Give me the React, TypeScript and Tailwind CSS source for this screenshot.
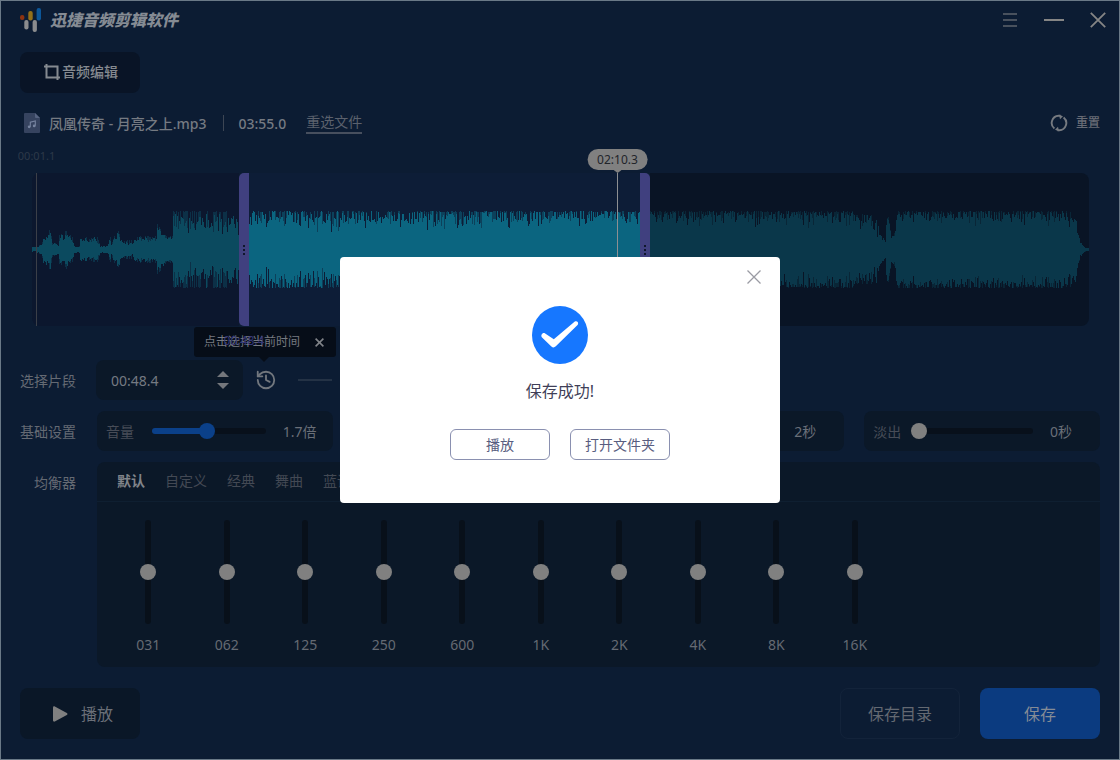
import React from 'react';
import { History } from 'lucide-react';

type Slice = { from: number; to: number };

const WAVE_HEIGHT = 153;
const WAVE_MIDDLE = 76;
const PEAK = 38;

/* Loudness envelope as [position, low, high] points; a bar falls between low and high. */
const ENVELOPE: [number, number, number][] = [
  [0, 1, 2], [6, 1, 3], [10, 3, 8], [11, 8, 17], [18, 10, 20], [20, 4, 7], [26, 3, 5],
  [27, 7, 14], [34, 9, 19], [40, 5, 12], [42, 2, 3], [47, 2, 3], [48, 7, 15], [56, 5, 11],
  [65, 4, 13], [68, 2, 3], [75, 2, 3], [78, 6, 13], [79, 3, 5], [82, 6, 14], [86, 9, 18],
  [90, 4, 9], [100, 4, 9], [103, 7, 13], [124, 7, 13], [125, 17, 25], [130, 12, 19],
  [134, 9, 13], [140, 8, 13], [141, 12, PEAK], [216, 12, PEAK], [217, 13, PEAK],
  [420, 16, PEAK], [500, 19, PEAK], [820, 20, PEAK], [822, 16, 34], [833, 14, 35],
  [839, 8, 34], [844, 8, 34], [848, 9, 14], [853, 6, 11], [854, 12, 30], [856, 24, 33],
  [859, 9, 12], [862, 10, 16], [865, 24, PEAK], [1044, 20, PEAK], [1045, 14, 18],
  [1048, 4, 8], [1052, 1, 2], [1057, 0, 1],
];

function randomSource(seed: number) {
  let state = seed;
  return () => {
    state = (state * 1664525 + 1013904223) % 4294967296;
    return state / 4294967296;
  };
}

function rangeAt(x: number): [number, number] {
  for (let i = 1; i < ENVELOPE.length; i++) {
    const [x1, lo1, hi1] = ENVELOPE[i];
    if (x <= x1) {
      const [x0, lo0, hi0] = ENVELOPE[i - 1];
      const t = (x - x0) / (x1 - x0);
      return [lo0 + (lo1 - lo0) * t, hi0 + (hi1 - hi0) * t];
    }
  }
  return [0, 1];
}

function buildWave() {
  const random = randomSource(77);
  const solid: number[][] = [];
  const faint: number[][] = [];
  for (let x = 0; x < 1057; x++) {
    const [lo, hi] = rangeAt(x);
    const power = x < 141 ? 1 : x < 217 ? 1.2 : 2.2;
    const drop = () => Math.pow(random(), power);
    const shared = drop();
    const pick = () => Math.max(0.5, hi - (hi - lo) * (shared * 0.6 + drop() * 0.4));
    const up = pick();
    const down = pick();
    solid.push([up, down]);
    faint.push(random() > 0.6 ? [Math.max(up, hi - random()), Math.max(down, hi - random())] : [up, down]);
  }
  return { solid, faint };
}

const WAVE = buildWave();

function wavePath(bars: number[][], { from, to }: Slice) {
  let d = '';
  for (let x = from; x < to; x++) {
    const [up, down] = bars[x];
    d += `M${x} ${(WAVE_MIDDLE - up).toFixed(1)}h1V${(WAVE_MIDDLE + 1 + down).toFixed(1)}h-1z`;
  }
  return d;
}

function Wave({ from, to, className }: Slice & { className: string }) {
  return (
    <svg
      viewBox={`${from} 0 ${to - from} ${WAVE_HEIGHT}`}
      preserveAspectRatio="none"
      className={`block h-full w-full fill-current ${className}`}
      shapeRendering="crispEdges"
      aria-hidden="true"
    >
      <path d={wavePath(WAVE.faint, { from, to })} opacity="0.5" />
      <path d={wavePath(WAVE.solid, { from, to })} />
    </svg>
  );
}

function Grip() {
  return (
    <span className="flex flex-col gap-[2px]">
      <i className="size-[2px] bg-[#10162c]" />
      <i className="size-[2px] bg-[#10162c]" />
      <i className="size-[2px] bg-[#10162c]" />
    </span>
  );
}

function Logo() {
  return (
    <svg width="22" height="26" viewBox="0 0 22 26" aria-hidden="true">
      <rect x="0" y="8" width="4.4" height="5" rx="2.1" fill="#8c3210" />
      <rect x="4.3" y="13" width="4.2" height="9.5" rx="2" fill="#8b8c8e" />
      <rect x="8.3" y="4" width="4.4" height="9.5" rx="2" fill="#93701a" />
      <rect x="12.6" y="13" width="4.3" height="12" rx="2" fill="#8b8c8e" />
      <rect x="16.6" y="1" width="4.4" height="12.6" rx="2" fill="#0c5698" />
    </svg>
  );
}

function TitleBar() {
  return (
    <header className="flex h-[38px] items-center">
      <Logo />
      <h1 className="ml-2 text-[16px] leading-6 font-black text-[#858b93] italic">迅捷音频剪辑软件</h1>
      <div className="ml-auto flex items-center gap-[26px]">
        <button aria-label="菜单" className="text-[#5d636c]">
          <svg width="15" height="16" viewBox="0 0 15 16" stroke="currentColor" strokeWidth="1.6">
            <path d="M0 2h14M0 8h14M0 14h14" />
          </svg>
        </button>
        <button aria-label="最小化" className="text-[#858585]">
          <svg width="20" height="16" viewBox="0 0 20 16" stroke="currentColor" strokeWidth="2">
            <path d="M0 8h20" />
          </svg>
        </button>
        <button aria-label="关闭" className="-mr-1.5 text-[#858585]">
          <svg width="16" height="16" viewBox="0 0 16 16" stroke="currentColor" strokeWidth="1.8">
            <path d="M.8.8l14.4 14.4M15.2.8L.8 15.2" />
          </svg>
        </button>
      </div>
    </header>
  );
}

function FileRow() {
  return (
    <div className="mt-5 flex h-5 items-center text-[14px] text-[#757a82]">
      <svg width="16" height="20" viewBox="0 0 16 20" className="ml-1" aria-hidden="true">
        <path d="M1 0h10l5 5v14a1 1 0 0 1-1 1H1a1 1 0 0 1-1-1V1a1 1 0 0 1 1-1z" fill="#36435f" />
        <path d="M11 0l5 5h-4a1 1 0 0 1-1-1z" fill="#566380" />
        <path d="M6.3 13.7V9.2l5-1.2v4.8" fill="none" stroke="#7784a0" strokeWidth="1.1" />
        <circle cx="5.2" cy="13.8" r="1.4" fill="#7784a0" />
        <circle cx="10.2" cy="12.9" r="1.4" fill="#7784a0" />
      </svg>
      <span className="ml-[9px] font-medium">凤凰传奇 - 月亮之上.mp3</span>
      <span className="ml-4 h-4 w-px bg-[#3d4654]" />
      <span className="ml-[15px] font-medium">03:55.0</span>
      <a href="#file" className="ml-5 border-b-2 border-[#474f5e] leading-5 text-[#5b616d]">
        重选文件
      </a>
      <button className="ml-auto flex items-center gap-2 text-[12px] font-medium text-[#686b75]">
        <svg width="18" height="18" viewBox="0 0 18 18" fill="none" stroke="#767a80" strokeWidth="1.9" aria-hidden="true">
          <path d="M4.400 14.600A7.200 7.200 0 0 1 8.600 1.800h2" />
          <path d="M13.600 3.400A7.200 7.200 0 0 1 9.400 16.200h-2" />
          <path d="M9 .8l4 1.400-3 3zM9 17.200l-4-1.400 3-3z" fill="#767a80" stroke="none" />
        </svg>
        重置
      </button>
    </div>
  );
}

function Waveform() {
  return (
    <section aria-label="波形" className="relative mt-10 mr-[11px] ml-3 flex h-[153px]">
      <div className="min-w-0 flex-[207] rounded-l-lg bg-[#0c172e]">
        <Wave from={0} to={207} className="text-[#0b4a5f]" />
      </div>
      <div className="relative flex w-[10px] items-center justify-center rounded-l-[5px] bg-[#40407f]">
        <Grip />
        <span className="absolute top-full left-1/2 z-20 -translate-x-1/2 pt-[5px] text-[12px] leading-5 text-[#34367a]">
          00:48.4
        </span>
      </div>
      <div className="min-w-0 flex-[391] bg-[#0d1d37]">
        <Wave from={217} to={608} className="text-[#0b6580]" />
      </div>
      <div className="flex w-[10px] items-center justify-center rounded-r-[5px] bg-[#40407f]">
        <Grip />
      </div>
      <div className="min-w-0 flex-[439] rounded-r-lg bg-[#091425]">
        <Wave from={618} to={1057} className="text-[#0a374a]" />
      </div>

      <div className="absolute inset-y-0 left-1 w-px bg-[#3b3f48]">
        <span className="absolute bottom-full left-1/2 -translate-x-1/2 pb-[9px] text-[11px] leading-4 text-[#2d3949]">
          00:01.1
        </span>
      </div>
      <div className="absolute inset-y-0 left-[585px] w-px bg-[#8d8f92]">
        <div className="absolute bottom-full left-1/2 flex -translate-x-1/2 flex-col items-center">
          <span className="rounded-full bg-[#808080] px-[10px] text-[12px] leading-[21px] text-[#22242a]">02:10.3</span>
          <svg width="8" height="3" viewBox="0 0 8 3" fill="#808080" aria-hidden="true">
            <path d="M0 0h8L4 3z" />
          </svg>
        </div>
      </div>
    </section>
  );
}

function SegmentRow() {
  return (
    <div className="mt-[34px] flex h-10 items-center">
      <label htmlFor="start" className="w-14 text-[14px] text-[#656a73]">
        选择片段
      </label>
      <div className="ml-5 flex h-10 w-[147px] items-center rounded-lg bg-[#0b1828] pr-[14px] pl-[15px]">
        <input
          id="start"
          defaultValue="00:48.4"
          className="w-0 flex-1 bg-transparent text-[14px] text-[#757a82] outline-none"
        />
        <div className="flex flex-col gap-[6px] text-[#74777c]">
          <button aria-label="增加">
            <svg width="12" height="6" viewBox="0 0 12 6" fill="currentColor" className="block">
              <path d="M6 0l6 6H0z" />
            </svg>
          </button>
          <button aria-label="减少">
            <svg width="12" height="6" viewBox="0 0 12 6" fill="currentColor" className="block">
              <path d="M0 0h12L6 6z" />
            </svg>
          </button>
        </div>
      </div>
      <div className="relative ml-3">
        <button aria-label="选择当前时间" className="block text-[#72777e]">
          <History size={22} strokeWidth={2} />
        </button>
        <div
          role="tooltip"
          className="absolute bottom-[34px] -left-[61px] flex h-[30px] w-[142px] items-center rounded-[3px] bg-[#060d18] pr-3 pl-[10px] text-[12px] whitespace-nowrap text-[#777a80]"
        >
          点击选择当前时间
          <button aria-label="关闭提示" className="ml-auto text-[#808388]">
            <svg width="9" height="9" viewBox="0 0 9 9" stroke="currentColor" strokeWidth="1.6" className="block">
              <path d="M.6.6l7.8 7.8M8.4.6L.6 8.4" />
            </svg>
          </button>
          <svg width="10" height="5" viewBox="0 0 10 5" fill="#060d18" className="absolute top-full left-[65px]" aria-hidden="true">
            <path d="M0 0h10L5 5z" />
          </svg>
        </div>
      </div>
      <span className="ml-[21px] h-[2px] w-[34px] bg-[#243245]" />
    </div>
  );
}

function SettingBox({
  id,
  label,
  value,
  children,
}: {
  id: string;
  label?: string;
  value: string;
  children: React.ReactNode;
}) {
  return (
    <div className="flex h-10 items-center rounded-lg bg-[#0b1828] pr-4 pl-[9px] text-[14px]">
      <label htmlFor={id} className="w-7 text-[#474c57]">
        {label}
      </label>
      {children}
      <output htmlFor={id} className="ml-[17px] w-[34px] whitespace-nowrap text-[#6a6f78]">
        {value}
      </output>
    </div>
  );
}

const PLAIN_SLIDER =
  'ml-[10px] h-[6px] w-0 flex-1 appearance-none rounded-full bg-[#08101b] [&::-webkit-slider-thumb]:size-4 [&::-webkit-slider-thumb]:appearance-none [&::-webkit-slider-thumb]:rounded-full [&::-webkit-slider-thumb]:bg-[#808080]';

function BasicRow() {
  return (
    <div className="mt-[11px] flex items-center">
      <span className="w-14 text-[14px] text-[#656a73]">基础设置</span>
      <div className="ml-[21px] grid flex-1 grid-cols-4 gap-5">
        <SettingBox id="volume" label="音量" value="1.7倍">
          <input
            id="volume"
            type="range"
            min={0}
            max={3.5}
            step={0.1}
            defaultValue={1.7}
            className="ml-[18px] h-[6px] w-0 flex-1 appearance-none rounded-full bg-[#08101b] bg-[linear-gradient(to_right,#0b4089_48%,#08101b_48%)] [&::-webkit-slider-thumb]:size-4 [&::-webkit-slider-thumb]:appearance-none [&::-webkit-slider-thumb]:rounded-full [&::-webkit-slider-thumb]:bg-[#0b4089]"
          />
        </SettingBox>
        <div className="col-start-3">
          <SettingBox id="fade-in" value="2秒">
            <input
              id="fade-in"
              type="range"
              aria-label="淡入"
              max={10}
              defaultValue={2}
              className={PLAIN_SLIDER}
            />
          </SettingBox>
        </div>
        <SettingBox id="fade-out" label="淡出" value="0秒">
          <input id="fade-out" type="range" max={10} defaultValue={0} className={PLAIN_SLIDER} />
        </SettingBox>
      </div>
    </div>
  );
}

const PRESETS = ['默认', '自定义', '经典', '舞曲', '蓝调'];
const BANDS = ['031', '062', '125', '250', '600', '1K', '2K', '4K', '8K', '16K'];

function Equalizer() {
  return (
    <div className="mt-[11px] flex items-start">
      <span className="w-14 pt-[11px] text-right text-[14px] leading-5 text-[#656a73]">均衡器</span>
      <section className="ml-[21px] flex-1 rounded-lg bg-[#0b1828] pb-3">
        <div role="tablist" className="flex h-10 items-center gap-5 border-b border-[#0f1f31] px-5 pb-[2px] text-[14px]">
          {PRESETS.map((name, i) => (
            <button
              key={name}
              role="tab"
              aria-selected={i === 0}
              className={i === 0 ? 'font-bold text-[#80848a]' : 'text-[#434954]'}
            >
              {name}
            </button>
          ))}
        </div>
        <div className="ml-3 grid w-[785px] grid-cols-10 pt-[18px]">
          {BANDS.map((band) => (
            <div key={band} className="flex flex-col items-center">
              <input
                id={`band-${band}`}
                type="range"
                min={-12}
                max={12}
                defaultValue={0}
                className="h-[104px] w-[6px] appearance-none rounded-full bg-[#08101a] [writing-mode:vertical-lr] [&::-webkit-slider-thumb]:size-4 [&::-webkit-slider-thumb]:appearance-none [&::-webkit-slider-thumb]:rounded-full [&::-webkit-slider-thumb]:bg-[#808080]"
              />
              <label htmlFor={`band-${band}`} className="mt-[11px] text-[14px] leading-5 text-[#656a73]">
                {band}
              </label>
            </div>
          ))}
        </div>
      </section>
    </div>
  );
}

function Footer() {
  return (
    <footer className="mt-[21px] flex gap-5 pb-5 text-[16px]">
      <button className="flex h-[51px] w-[120px] items-center justify-center gap-[13px] rounded-lg bg-[#0a1727] pl-[6px] text-[#6a6f78]">
        <svg width="15" height="16" viewBox="0 0 15 16" fill="#808080" aria-hidden="true">
          <path d="M0 1.400C0 .4 1 0 1.800.4l12 6.600c.9.5.9 1.500 0 2l-12 6.600C1 16 0 15.600 0 14.600z" />
        </svg>
        播放
      </button>
      <button className="ml-auto h-[51px] w-[120px] rounded-lg border border-[#13233a] text-[#646972]">保存目录</button>
      <button className="h-[51px] w-[120px] rounded-lg bg-[#0b3b80] text-[#858c96]">保存</button>
    </footer>
  );
}

function SavedDialog() {
  return (
    <div className="absolute inset-0 z-30 flex items-center justify-center">
      <div role="dialog" aria-labelledby="saved" className="flex w-[440px] flex-col items-center rounded-[4px] bg-white pb-[43px]">
        <button aria-label="关闭" className="mt-[13px] mr-[19px] self-end text-[#9a9ba3]">
          <svg width="14" height="14" viewBox="0 0 14 14" stroke="currentColor" strokeWidth="1.3" className="block">
            <path d="M.5.5l13 13M13.500.5l-13 13" />
          </svg>
        </button>
        <svg width="56" height="58" viewBox="0 0 56 58" className="mt-[22px]" aria-hidden="true">
          <ellipse cx="28" cy="29" rx="28" ry="29" fill="#1677ff" />
          <path
            d="M9.800 31.200C8.600 29.300 10.200 26.600 12.800 27.200L21.800 33.200L42.800 15.600C45 14.600 47 16.600 45.800 18.700L23.800 40.300C22.300 41.700 20.800 41.700 19.400 40.500z"
            fill="#fff"
          />
        </svg>
        <p id="saved" className="mt-[15px] text-[16px] leading-6 text-[#3f3f58]">
          保存成功!
        </p>
        <div className="mt-[26px] flex gap-5 text-[14px] text-[#585d80]">
          <button className="h-[31px] w-[100px] rounded-[6px] border border-[#8a90b0]">播放</button>
          <button className="h-[31px] w-[100px] rounded-[6px] border border-[#8a90b0]">打开文件夹</button>
        </div>
      </div>
    </div>
  );
}

export default function App() {
  return (
    <main className='relative min-h-screen border border-[#6a7987] bg-[#0c1c33] px-[19px] font-["Noto_Sans","Noto_Sans_CJK_SC",sans-serif]'>
      <TitleBar />
      <button className="mt-[13px] flex h-[41px] w-[120px] items-center justify-center gap-[2px] rounded-lg bg-[#091426] pb-[2px] pl-[2px] text-[14px] font-medium text-[#858a90]">
        <svg width="16" height="16" viewBox="0 0 16 16" fill="none" stroke="currentColor" strokeWidth="2" aria-hidden="true">
          <path d="M2.500 0v13.500H16" />
          <path d="M0 2.500h13.500V16" />
        </svg>
        音频编辑
      </button>
      <FileRow />
      <Waveform />
      <SegmentRow />
      <BasicRow />
      <Equalizer />
      <Footer />
      <SavedDialog />
    </main>
  );
}
